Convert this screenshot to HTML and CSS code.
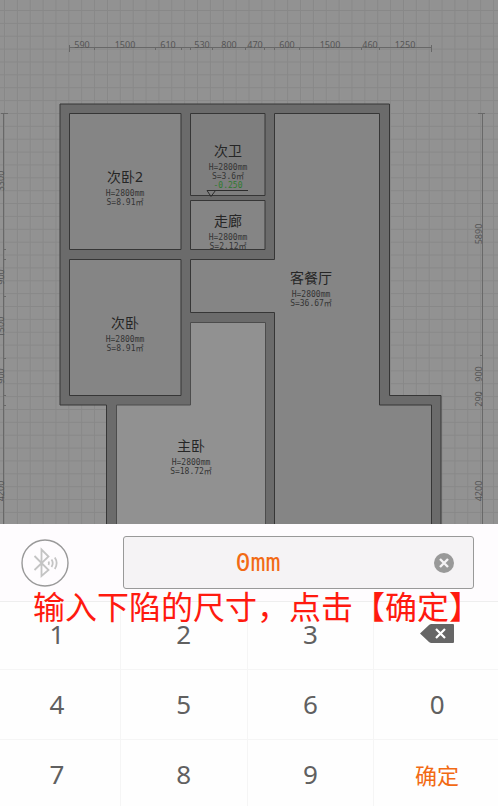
FILE: index.html
```html
<!DOCTYPE html>
<html lang="zh-CN">
<head>
    <meta charset="UTF-8">
    <meta name="viewport" content="width=device-width, initial-scale=1.0">
    <title>下陷尺寸</title>
    <link rel="stylesheet" href="styles.css">
</head>
<body>
    <main class="app">
        <svg class="plan" viewBox="0 0 498 524" role="img" aria-label="户型图">
            <defs>
                <pattern id="grid" x="4" y="10" width="12.87" height="12.87" patternUnits="userSpaceOnUse">
                    <path d="M0.5 0V12.87M0 0.5H12.87" stroke="#888" fill="none"/>
                </pattern>
            </defs>
            <rect width="498" height="524" fill="#929292"/>
            <rect width="498" height="524" fill="url(#grid)"/>

            <!-- walls -->
            <path class="wall" d="M60 104H389.5V395.5H441V530H106.5V405H60Z"/>

            <!-- rooms -->
            <path class="room" d="M69.5 113.5H181V249.5H69.5Z"/>
            <path class="room dark" d="M190.5 113.5H265V195.5H190.5Z"/>
            <path class="room" d="M190.5 200.5H265V249.5H190.5Z"/>
            <path class="room" d="M69.5 259.5H181V395.5H69.5Z"/>
            <path class="room" d="M274.5 113.5H379.5V405H431.5V530H274.5V312.5H190.5V259.5H274.5Z"/>
            <path class="room active" d="M190.5 322.5H265.5V530H116.5V405H190.5Z"/>

            <!-- top dimensions -->
            <path class="ruler" d="M69.5 47.5H431.5M69.5 45V52M431.5 45V52M94.5 47V50M155.5 47V50M181.5 47V50M190.5 47V50M212.5 47V50M245.5 47V50M264.5 47V50M274.5 47V50M299.5 47V50M361.5 47V50M379.5 47V50"/>
            <g class="dim">
                <text x="82" y="48">590</text>
                <text x="125" y="48">1500</text>
                <text x="168" y="48">610</text>
                <text x="202" y="48">530</text>
                <text x="229" y="48">800</text>
                <text x="255" y="48">470</text>
                <text x="287" y="48">600</text>
                <text x="330" y="48">1500</text>
                <text x="370" y="48">460</text>
                <text x="405" y="48">1250</text>
            </g>

            <!-- side dimensions -->
            <path class="ruler" d="M3.5 113.5V524M1 113.5H8M3 249.5H6M3 259.5H6M3 296.5H6M3 358.5H6M3 395.5H6M3 405.5H6"/>
            <path class="ruler" d="M482.5 113.5V524M478 113.5H485M480 355.5H483M480 393.5H483"/>
            <g class="dim">
                <text transform="translate(4 181) rotate(-90)">3300</text>
                <text transform="translate(4 277) rotate(-90)">900</text>
                <text transform="translate(4 327) rotate(-90)">1500</text>
                <text transform="translate(4 376) rotate(-90)">900</text>
                <text transform="translate(4 491) rotate(-90)">4200</text>
                <text transform="translate(482 234) rotate(-90)">5890</text>
                <text transform="translate(482 374) rotate(-90)">900</text>
                <text transform="translate(482 399) rotate(-90)">290</text>
                <text transform="translate(482 491) rotate(-90)">4200</text>
            </g>

            <!-- room labels -->
            <g class="label">
                <text class="name" x="125" y="182">次卧2</text>
                <text x="125" y="196">H=2800mm</text>
                <text x="125" y="205">S=8.91㎡</text>

                <text class="name" x="228" y="156">次卫</text>
                <text x="228" y="170">H=2800mm</text>
                <text x="228" y="179">S=3.6㎡</text>
                <text class="drop" x="228" y="188">-0.250</text>
                <path d="M207 190.5H248M207 190.5L211 196.5L215.500 190.5"/>

                <text class="name" x="228" y="226">走廊</text>
                <text x="228" y="240">H=2800mm</text>
                <text x="228" y="249">S=2.12㎡</text>

                <text class="name" x="125" y="328">次卧</text>
                <text x="125" y="342">H=2800mm</text>
                <text x="125" y="351">S=8.91㎡</text>

                <text class="name" x="311" y="283">客餐厅</text>
                <text x="311" y="297">H=2800mm</text>
                <text x="311" y="306">S=36.67㎡</text>

                <text class="name" x="191" y="451">主卧</text>
                <text x="191" y="465">H=2800mm</text>
                <text x="191" y="474">S=18.72㎡</text>
            </g>
        </svg>

        <section class="panel">
            <div class="entry">
                <button class="bluetooth" type="button" aria-label="蓝牙">
                    <svg width="48" height="48" viewBox="0 0 48 48" fill="none" stroke="#c4c4c4">
                        <circle cx="24" cy="24" r="23" stroke="#999" stroke-width="1.4"/>
                        <path d="M13.500 17L27.500 31L20.500 37V10.500L27.500 17.500L13.500 31" stroke-width="1.8"/>
                        <path d="M27.500 22.500Q28.500 24 27.500 26M30.500 20.500Q33 24 30.500 28M33.800 18.500Q37.500 24 33.800 30" stroke-width="1.8"/>
                    </svg>
                </button>
                <div class="field">
                    <input type="text" value="0mm" aria-label="下陷尺寸">
                    <button class="clear" type="button" aria-label="清除">
                        <svg width="20" height="20" viewBox="0 0 20 20">
                            <circle cx="10" cy="10" r="10" fill="#999"/>
                            <path d="M6 6L14 14M14 6L6 14" stroke="#f5f3f5" stroke-width="2.4"/>
                        </svg>
                    </button>
                </div>
            </div>

            <div class="keypad">
                <button type="button">1</button>
                <button type="button">2</button>
                <button type="button">3</button>
                <button type="button" aria-label="删除">
                    <svg width="34" height="19" viewBox="0 0 34 19">
                        <path d="M0 9.500L9 1Q10 0 11.500 0H33Q34 0 34 1V18Q34 19 33 19H11.500Q10 19 9 18Z" fill="#666"/>
                        <path d="M16 5L25 14M25 5L16 14" stroke="#fff" stroke-width="2.2"/>
                    </svg>
                </button>
                <button type="button">4</button>
                <button type="button">5</button>
                <button type="button">6</button>
                <button type="button">0</button>
                <button type="button">7</button>
                <button type="button">8</button>
                <button type="button">9</button>
                <button class="confirm" type="button">确定</button>
            </div>

            <p class="hint">输入下陷的尺寸，点击【确定】</p>
        </section>
    </main>
</body>
</html>
```
FILE: styles.css
```css
* {
    box-sizing: border-box;
}
body {
    margin: 0;
    font-family: "Noto Sans", "Noto Sans CJK SC", sans-serif;
    background: #fefefe;
}
.app {
    height: 100vh;
    overflow: hidden;
}

/* floor plan */
.plan {
    display: block;
    width: 100%;
    height: auto;
}
.wall {
    fill: #6b6b6b;
    stroke: #363636;
}
.room {
    fill: #858585;
    stroke: #363636;
}
.room.dark { fill: #7e7e7e; }
.room.active {
    fill: #919191;
    stroke: #4c4c4c;
}
.ruler {
    fill: none;
    stroke: #686868;
}
.dim text {
    font-size: 9px;
    fill: #555;
    text-anchor: middle;
}
.label text {
    font-family: "DejaVu Sans Mono", "Noto Sans CJK SC", monospace;
    font-size: 8px;
    fill: #343434;
    text-anchor: middle;
}
.label .name {
    font-family: "Noto Sans", "Noto Sans CJK SC", sans-serif;
    font-size: 14px;
    fill: #262626;
}
.label .drop { fill: #2f7a2f; }
.label path {
    fill: none;
    stroke: #2c2c2c;
}

/* input panel */
.panel {
    position: relative;
    overflow: hidden;
}
button {
    padding: 0;
    border: 0;
    background: none;
    font-family: inherit;
    cursor: pointer;
}
button svg {
    display: block;
}
.entry {
    display: flex;
    align-items: center;
    gap: 54px;
    padding: 12px 24px 12px 21px;
    background: #fefcfe;
    border-bottom: 1px solid #eee;
}
.field {
    display: flex;
    flex: 1;
    align-items: center;
    min-width: 0;
    height: 53px;
    padding-right: 19px;
    border: 1px solid #999;
    border-radius: 3px;
    background: #f5f3f5;
}
.field input {
    flex: 1;
    min-width: 0;
    padding: 0 42px 0 0;
    border: 0;
    outline: 0;
    background: none;
    color: #f26a14;
    font-family: "DejaVu Sans Mono", monospace;
    font-size: 25px;
    text-align: center;
}
.keypad {
    display: grid;
    grid-template-columns: repeat(4, 1fr);
    grid-auto-rows: 70px;
    margin: -2px -3px 0 -6px;
}
.keypad button {
    display: flex;
    align-items: center;
    justify-content: center;
    padding-bottom: 2px;
    border-right: 1px solid #f5f5f5;
    border-bottom: 1px solid #f5f5f5;
    color: #606060;
    font-size: 26px;
}
.keypad .confirm {
    color: #f26a14;
    font-size: 22px;
}
.hint {
    position: absolute;
    top: 61px;
    left: 33px;
    margin: 0;
    color: #ff1a0f;
    font-family: "Noto Sans CJK SC", sans-serif;
    font-size: 32px;
    line-height: 40px;
    white-space: nowrap;
    pointer-events: none;
}
```
